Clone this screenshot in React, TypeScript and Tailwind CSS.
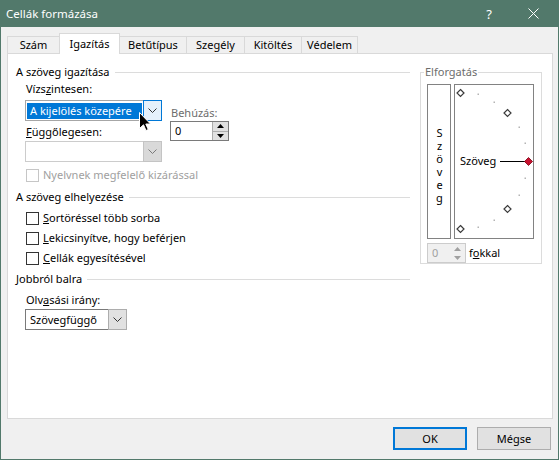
import React from 'react';

const TABS = [
  { label: 'Szám', w: 'w-[53px]' },
  { label: 'Igazítás', w: 'w-[61px]', active: true },
  { label: 'Betűtípus', w: 'w-[68px]' },
  { label: 'Szegély', w: 'w-[59px]' },
  { label: 'Kitöltés', w: 'w-[58px]' },
  { label: 'Védelem', w: 'w-[57px]' },
];

function Chevron({ color = '#333' }: { color?: string }) {
  return (
    <svg width="9" height="5" viewBox="0 0 9 5">
      <polyline points="0.5,0.5 4.5,4.5 8.5,0.5" fill="none" stroke={color} strokeWidth="1" />
    </svg>
  );
}

function GroupHeader({ label }: { label: string }) {
  return (
    <div className="flex h-4 items-center">
      <span>{label}</span>
      <div className="ml-[5px] flex-1 border-t border-[#dcdcdc]" />
    </div>
  );
}

function Check({ children, disabled }: { children: React.ReactNode; disabled?: boolean }) {
  return (
    <div className={`flex h-[20px] items-center pl-[10px] ${disabled ? 'text-[#a0a0a0]' : ''}`}>
      <div
        className={`h-[13px] w-[13px] border bg-white ${disabled ? 'border-[#c6c6c6]' : 'border-[#333333]'}`}
      />
      <span className="ml-[4px]">{children}</span>
    </div>
  );
}

function Spin({ value, disabled, w }: { value: string; disabled?: boolean; w: string }) {
  const tri = disabled ? '#a0a0a0' : '#000';
  return (
    <div
      className={`flex h-[20px] ${w} items-stretch border ${
        disabled ? 'border-[#cccccc] bg-[#f0f0f0] text-[#a0a0a0]' : 'border-[#7a7a7a] bg-white'
      }`}
    >
      <span className="flex-1 pl-[4px] leading-[18px]">{value}</span>
      <div className={`flex w-[16px] flex-col ${disabled ? '' : 'border-l border-[#adadad]'}`}>
        <div className={`flex flex-1 items-center justify-center ${disabled ? '' : 'bg-[#e1e1e1] border-b border-[#adadad]'}`}>
          <svg width="7" height="4" viewBox="0 0 7 4">
            <polygon points="3.5,0 7,4 0,4" fill={tri} />
          </svg>
        </div>
        <div className={`flex flex-1 items-center justify-center ${disabled ? '' : 'bg-[#e1e1e1]'}`}>
          <svg width="7" height="4" viewBox="0 0 7 4">
            <polygon points="0,0 7,0 3.5,4" fill={tri} />
          </svg>
        </div>
      </div>
    </div>
  );
}

function Dial() {
  // centres in the dial's inner coordinates
  const diamonds = [
    [5, 8],
    [52, 28],
    [52, 124],
    [5, 144],
  ];
  const dots = [
    [23, 9],
    [39, 17],
    [64, 42],
    [70, 58],
    [70, 93],
    [64, 110],
    [39, 135],
    [23, 142],
  ];
  return (
    <div className="relative h-[155px] w-[80px] border border-[#828282] bg-white">
      <svg className="absolute left-0 top-0" width="78" height="153" viewBox="0 0 78 153">
        {dots.map(([x, y]) => (
          <rect key={`${x}-${y}`} x={x - 0.5} y={y - 0.5} width="1.5" height="1.5" fill="#b4b4b4" />
        ))}
        {diamonds.map(([x, y]) => (
          <polygon
            key={`${x}-${y}`}
            points={`${x + 0.5},${y - 3.5} ${x + 4},${y} ${x + 0.5},${y + 3.5} ${x - 3},${y}`}
            fill="#fff"
            stroke="#3a3a3a"
            strokeWidth="1.2"
          />
        ))}
        <line x1="45" y1="76.5" x2="70" y2="76.5" stroke="#000" strokeWidth="1" />
        <polygon points="73.5,72.5 77.5,76.5 73.5,80.5 69.5,76.5" fill="#c8102e" stroke="#7a0010" strokeWidth="0.8" />
      </svg>
      <span className="absolute left-[5px] top-[68px] leading-[16px]">Szöveg</span>
    </div>
  );
}

export default function App() {
  return (
    <div className="relative h-[460px] w-[559px] overflow-hidden border-x border-b border-[#52796b] bg-[#f0f0f0] font-['Noto_Sans',sans-serif] text-[11px] leading-[16px] text-black">
      {/* title bar */}
      <div className="-mx-px flex h-[27px] items-center bg-[#52796b] pl-[6px] text-[11.5px] text-white">
        <span className="flex-1">Cellák formázása</span>
        <span className="mr-[36px] text-[13px]">?</span>
        <svg className="mr-[20px]" width="11" height="11" viewBox="0 0 11 11">
          <path d="M0.5 0.5 L10.5 10.5 M10.5 0.5 L0.5 10.5" stroke="#fff" strokeWidth="1" />
        </svg>
      </div>

      <div className="px-[6px] pt-[6px]">
        {/* tabs */}
        <div className="flex h-[20px] items-end">
          {TABS.map((t, i) => (
            <div
              key={t.label}
              className={`flex items-center justify-center border border-b-0 border-[#d9d9d9] ${t.w} ${
                i > 0 ? '-ml-px' : ''
              } ${t.active ? 'relative z-10 -mb-px h-[21px] bg-white' : 'h-[17px] bg-[#f0f0f0]'}`}
            >
              {t.label}
            </div>
          ))}
        </div>

        {/* panel */}
        <div className="flex h-[366px] w-[546px] border border-[#d9d9d9] bg-white pl-[8px] pt-[10px]">
          <div className="flex w-[394px] flex-col">
            <GroupHeader label="A szöveg igazítása" />
            <div className="flex pl-[9px]">
              <div className="flex flex-col">
                <div className="mt-px h-4 pl-px">
                  Vízs<span className="underline">z</span>intesen:
                </div>
                <div className="mt-[3px] flex h-[21px] w-[137px] border border-[#a6a6a6] bg-white">
                  <div className="flex flex-1 items-center p-px">
                    <div className="flex h-[16px] w-full items-center bg-[#0078d7] pl-[3px] text-white">
                      A kijelölés közepére
                    </div>
                  </div>
                  <div className="-my-px -mr-px flex w-[19px] items-center justify-center border border-[#0078d7] bg-[#e5f1fb]">
                    <Chevron />
                  </div>
                </div>
                <div className="mt-[3px] h-4 pl-px">
                  <span className="underline">F</span>üggőlegesen:
                </div>
                <div className="mt-px flex h-[21px] w-[137px] border border-[#cccccc] bg-white">
                  <div className="flex-1" />
                  <div className="-my-px -mr-px flex w-[19px] items-center justify-center border border-[#c4c4c4] bg-[#d9d9d9]">
                    <Chevron color="#7a7a7a" />
                  </div>
                </div>
              </div>
              <div className="ml-[8px] mt-[25px] flex flex-col">
                <div className="h-4 pl-px text-[#6d6d6d]">Behúzás:</div>
                <Spin value="0" w="w-[59px]" />
              </div>
            </div>
            <div className="mt-[3px]">
              <Check disabled>Nyelvnek megfelelő kizárással</Check>
            </div>

            <div className="mt-[4px]">
              <GroupHeader label="A szöveg elhelyezése" />
            </div>
            <div className="mt-[3px] flex flex-col">
              <Check>
                <span className="underline">S</span>ortöréssel több sorba
              </Check>
              <Check>
                <span className="underline">L</span>ekicsinyítve, hogy beférjen
              </Check>
              <Check>
                <span className="underline">C</span>ellák egyesítésével
              </Check>
            </div>

            <div className="mt-[3px]">
              <GroupHeader label="Jobbról balra" />
            </div>
            <div className="mt-[5px] h-4 pl-[10px]">
              Olv<span className="underline">a</span>sási irány:
            </div>
            <div className="ml-[9px] mt-px flex h-[21px] w-[102px] border border-[#7a7a7a] bg-white">
              <span className="flex-1 pl-[4px] leading-[19px]">Szövegfüggő</span>
              <div className="-my-px -mr-px flex w-[19px] items-center justify-center border border-[#adadad] bg-[#e1e1e1]">
                <Chevron />
              </div>
            </div>
          </div>

          {/* rotation group */}
          <div className="relative ml-[10px] mt-[8px] h-[192px] w-[122px] border border-[#dcdcdc] pl-[6px] pt-[11px]">
            <span className="absolute -top-[9px] left-[3px] bg-white px-px leading-[16px] text-[#6d6d6d]">
              Elforgatás
            </span>
            <div className="flex gap-[3px]">
              <div className="flex h-[155px] w-[24px] items-center justify-center border border-[#828282] pt-[4px]">
                <span className="tracking-[-2px] [text-orientation:upright] [writing-mode:vertical-rl]">
                  Szöveg
                </span>
              </div>
              <Dial />
            </div>
            <div className="mt-[4px] flex items-center">
              <Spin value="0" disabled w="w-[39px]" />
              <span className="ml-[3px]">
                f<span className="underline">o</span>kkal
              </span>
            </div>
          </div>
        </div>
      </div>

      {/* footer buttons */}
      <div className="mt-[8px] flex justify-end gap-[10px] pr-[7px]">
        <button className="h-[23px] w-[74px] border-2 border-[#0078d7] bg-[#e1e1e1]">OK</button>
        <button className="h-[23px] w-[74px] border border-[#adadad] bg-[#e1e1e1]">Mégse</button>
      </div>

      {/* mouse pointer */}
      <svg className="absolute left-[138px] top-[112px]" width="13" height="20" viewBox="0 0 13 20">
        <path
          d="M0.5 0.5 L0.5 16.5 L4.5 12.8 L7 18.5 L9.3 17.5 L6.8 12 L11.5 12 Z"
          fill="#000"
          stroke="#fff"
          strokeWidth="1"
        />
      </svg>
    </div>
  );
}
